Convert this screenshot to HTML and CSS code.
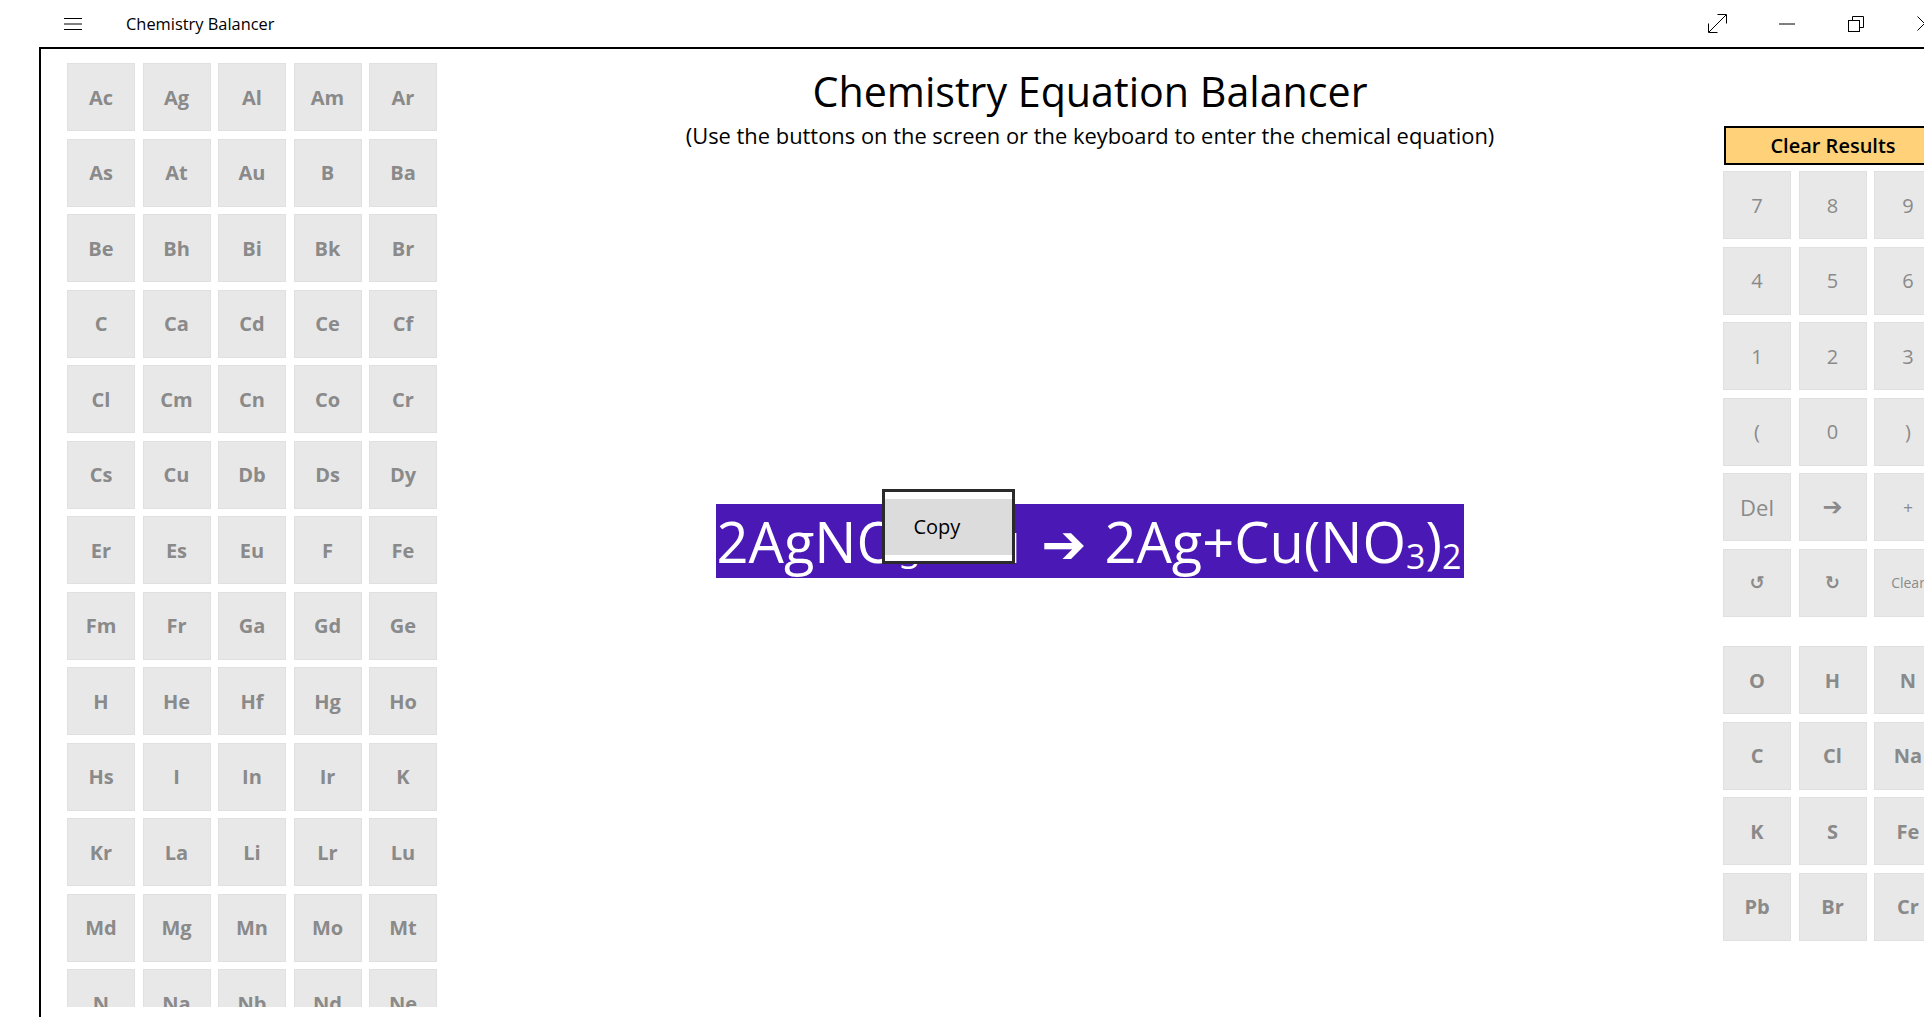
FILE: index.html
```html
<!DOCTYPE html>
<html lang="en">
<head>
<meta charset="utf-8">
<title>Chemistry Balancer</title>
<link rel="stylesheet" href="styles.css">
</head>
<body>
<div class="window">
  <header class="titlebar">
    <svg class="hamburger" width="18" height="12" viewBox="0 0 18 12"><path d="M0 0.5H18M0 6H18M0 11.5H18" stroke="#000" stroke-width="1" fill="none"/></svg>
    <span class="app-title">Chemistry Balancer</span>
    <div class="controls">
      <span class="ctl"><svg width="19" height="19" viewBox="0 0 19 19" fill="none" stroke="#000" stroke-width="1"><path d="M1 18L18 1M9.5 0.5H18.5V9.5M0.5 9.5V18.5H9.5"/></svg></span>
      <span class="ctl"><svg width="16" height="2" viewBox="0 0 16 2" fill="none" stroke="#000" stroke-width="1"><path d="M0 1H16"/></svg></span>
      <span class="ctl"><svg width="16" height="16" viewBox="0 0 16 16" fill="none" stroke="#000" stroke-width="1"><rect x="0.5" y="4.5" width="11" height="11"/><path d="M4.5 4.5V0.5H15.5V11.5H11.5"/></svg></span>
      <span class="ctl"><svg width="15" height="15" viewBox="0 0 15 15" fill="none" stroke="#000" stroke-width="1"><path d="M0.5 0.5L14.5 14.5M0.5 14.5L14.5 0.5"/></svg></span>
    </div>
  </header>

  <main class="frame">
    <section class="left-panel">
      <div class="scroller">
        <div class="grid5">
          <button class="key bold">Ac</button><button class="key bold">Ag</button><button class="key bold">Al</button><button class="key bold">Am</button><button class="key bold">Ar</button>
          <button class="key bold">As</button><button class="key bold">At</button><button class="key bold">Au</button><button class="key bold">B</button><button class="key bold">Ba</button>
          <button class="key bold">Be</button><button class="key bold">Bh</button><button class="key bold">Bi</button><button class="key bold">Bk</button><button class="key bold">Br</button>
          <button class="key bold">C</button><button class="key bold">Ca</button><button class="key bold">Cd</button><button class="key bold">Ce</button><button class="key bold">Cf</button>
          <button class="key bold">Cl</button><button class="key bold">Cm</button><button class="key bold">Cn</button><button class="key bold">Co</button><button class="key bold">Cr</button>
          <button class="key bold">Cs</button><button class="key bold">Cu</button><button class="key bold">Db</button><button class="key bold">Ds</button><button class="key bold">Dy</button>
          <button class="key bold">Er</button><button class="key bold">Es</button><button class="key bold">Eu</button><button class="key bold">F</button><button class="key bold">Fe</button>
          <button class="key bold">Fm</button><button class="key bold">Fr</button><button class="key bold">Ga</button><button class="key bold">Gd</button><button class="key bold">Ge</button>
          <button class="key bold">H</button><button class="key bold">He</button><button class="key bold">Hf</button><button class="key bold">Hg</button><button class="key bold">Ho</button>
          <button class="key bold">Hs</button><button class="key bold">I</button><button class="key bold">In</button><button class="key bold">Ir</button><button class="key bold">K</button>
          <button class="key bold">Kr</button><button class="key bold">La</button><button class="key bold">Li</button><button class="key bold">Lr</button><button class="key bold">Lu</button>
          <button class="key bold">Md</button><button class="key bold">Mg</button><button class="key bold">Mn</button><button class="key bold">Mo</button><button class="key bold">Mt</button>
          <button class="key bold">N</button><button class="key bold">Na</button><button class="key bold">Nb</button><button class="key bold">Nd</button><button class="key bold">Ne</button>
          <button class="key bold">Ni</button><button class="key bold">No</button><button class="key bold">Np</button><button class="key bold">O</button><button class="key bold">Os</button>
          <button class="key bold">P</button><button class="key bold">Pa</button><button class="key bold">Pb</button><button class="key bold">Pd</button><button class="key bold">Pm</button>
        </div>
      </div>
    </section>

    <section class="center">
      <h1 class="title">Chemistry Equation Balancer</h1>
      <p class="subtitle">(Use the buttons on the screen or the keyboard to enter the chemical equation)</p>
      <div class="equation">2AgNO<span class="sub">3</span>+Cu<span class="arrow">➔</span>2Ag+Cu(NO<span class="sub">3</span>)<span class="sub">2</span><div class="menu"><div class="menu-item">Copy</div></div></div>
    </section>

    <section class="right-panel">
      <button class="clear-results">Clear Results</button>
      <div class="grid3 keypad">
        <button class="key num">7</button><button class="key num">8</button><button class="key num">9</button>
        <button class="key num">4</button><button class="key num">5</button><button class="key num">6</button>
        <button class="key num">1</button><button class="key num">2</button><button class="key num">3</button>
        <button class="key num">(</button><button class="key num">0</button><button class="key num">)</button>
        <button class="key word">Del</button><button class="key sym-arrow">➔</button><button class="key plus">+</button>
        <button class="key sym">↺</button><button class="key sym">↻</button><button class="key small">Clear</button>
      </div>
      <div class="grid3 common">
        <button class="key bold">O</button><button class="key bold">H</button><button class="key bold">N</button>
        <button class="key bold">C</button><button class="key bold">Cl</button><button class="key bold">Na</button>
        <button class="key bold">K</button><button class="key bold">S</button><button class="key bold">Fe</button>
        <button class="key bold">Pb</button><button class="key bold">Br</button><button class="key bold">Cr</button>
      </div>
    </section>
  </main>
</div>
</body>
</html>
```

FILE: styles.css
```css
* {
  box-sizing: border-box;
  margin: 0;
  padding: 0;
}

html, body {
  width: 1924px;
  height: 1020px;
  overflow: hidden;
  background: #ffffff;
}

body {
  font-family: "Open Sans", "Noto Sans", sans-serif;
  color: #000000;
}

.window {
  width: 1959px;
}

/* title bar */
.titlebar {
  height: 47px;
  display: flex;
  align-items: center;
  padding-left: 64px;
}

.hamburger {
  display: block;
}

.app-title {
  margin-left: 44px;
  font-size: 16.4px;
  line-height: 20px;
  color: #000;
}

.controls {
  margin-left: auto;
  display: flex;
}

.ctl {
  width: 69px;
  height: 47px;
  display: flex;
  align-items: center;
  justify-content: center;
}

.ctl svg {
  display: block;
}

/* main frame */
.frame {
  margin-left: 39px;
  width: 1903px;
  height: 970px;
  border-top: 2px solid #000;
  border-left: 2px solid #000;
  display: grid;
  grid-template-columns: 416px 1266px 219px;
  align-items: start;
}

.left-panel {
  padding: 14px 20px 0 26px;
}

.scroller {
  height: 944px;
  overflow: hidden;
}

.grid5 {
  display: grid;
  grid-template-columns: repeat(5, 68px);
  grid-auto-rows: 68px;
  gap: 7.5px;
}

.grid3 {
  display: grid;
  grid-template-columns: repeat(3, 68px);
  grid-auto-rows: 68px;
  gap: 7.5px;
}

.key {
  background: #e8e8e8;
  border: 1px solid #e0e0e0;
  color: #8a8a8a;
  font-family: "Open Sans", "Noto Sans", sans-serif;
  display: flex;
  align-items: center;
  justify-content: center;
  white-space: nowrap;
  overflow: hidden;
}

.key.bold {
  font-size: 20px;
  font-weight: 700;
}

.key.num {
  font-size: 20px;
  font-weight: 400;
}

.key.word {
  font-size: 22px;
  font-weight: 400;
}

.key.plus {
  font-size: 17px;
  font-weight: 400;
}

.key.sym {
  font-family: "DejaVu Sans", sans-serif;
  font-size: 18px;
  font-weight: 700;
}

.key.sym-arrow {
  font-family: "DejaVu Sans", sans-serif;
  font-size: 24px;
  font-weight: 700;
}

.key.small {
  font-size: 14px;
  font-weight: 400;
}

/* center */
.center {
  display: flex;
  flex-direction: column;
  align-items: center;
  padding-top: 14px;
}

.title {
  font-size: 41.2px;
  line-height: 56px;
  font-weight: 400;
  white-space: nowrap;
}

.subtitle {
  margin-top: 4px;
  font-size: 21.9px;
  line-height: 26px;
  white-space: nowrap;
}

.equation {
  position: relative;
  margin-top: 355px;
  background: #4a18b4;
  color: #ffffff;
  font-size: 56px;
  line-height: 74px;
  height: 74px;
  white-space: nowrap;
  padding: 0 2px 0 0;
}

.equation .sub {
  font-size: 34px;
  vertical-align: -6px;
  line-height: 0;
}

.equation .arrow {
  font-family: "DejaVu Sans", sans-serif;
  font-size: 54px;
  font-weight: 700;
  line-height: 0;
  margin: 0 18px 0 20px;
}

.menu {
  position: absolute;
  left: 166px;
  top: -15px;
  width: 133px;
  height: 75px;
  border: 3px solid #2b2b2b;
  background: #ffffff;
  padding-top: 7px;
}

.menu-item {
  height: 56px;
  background: #dcdcdc;
  color: #000;
  font-size: 20px;
  line-height: 56px;
  padding-left: 28px;
}

/* right */
.right-panel {
  padding-top: 77px;
}

.clear-results {
  display: block;
  width: 218px;
  height: 39px;
  margin-left: 1px;
  border: 2px solid #000;
  background: #ffd27a;
  color: #000;
  font-family: "Open Sans", "Noto Sans", sans-serif;
  font-size: 20px;
  font-weight: 600;
}

.keypad {
  margin-top: 6px;
}

.common {
  margin-top: 29.5px;
}
```
